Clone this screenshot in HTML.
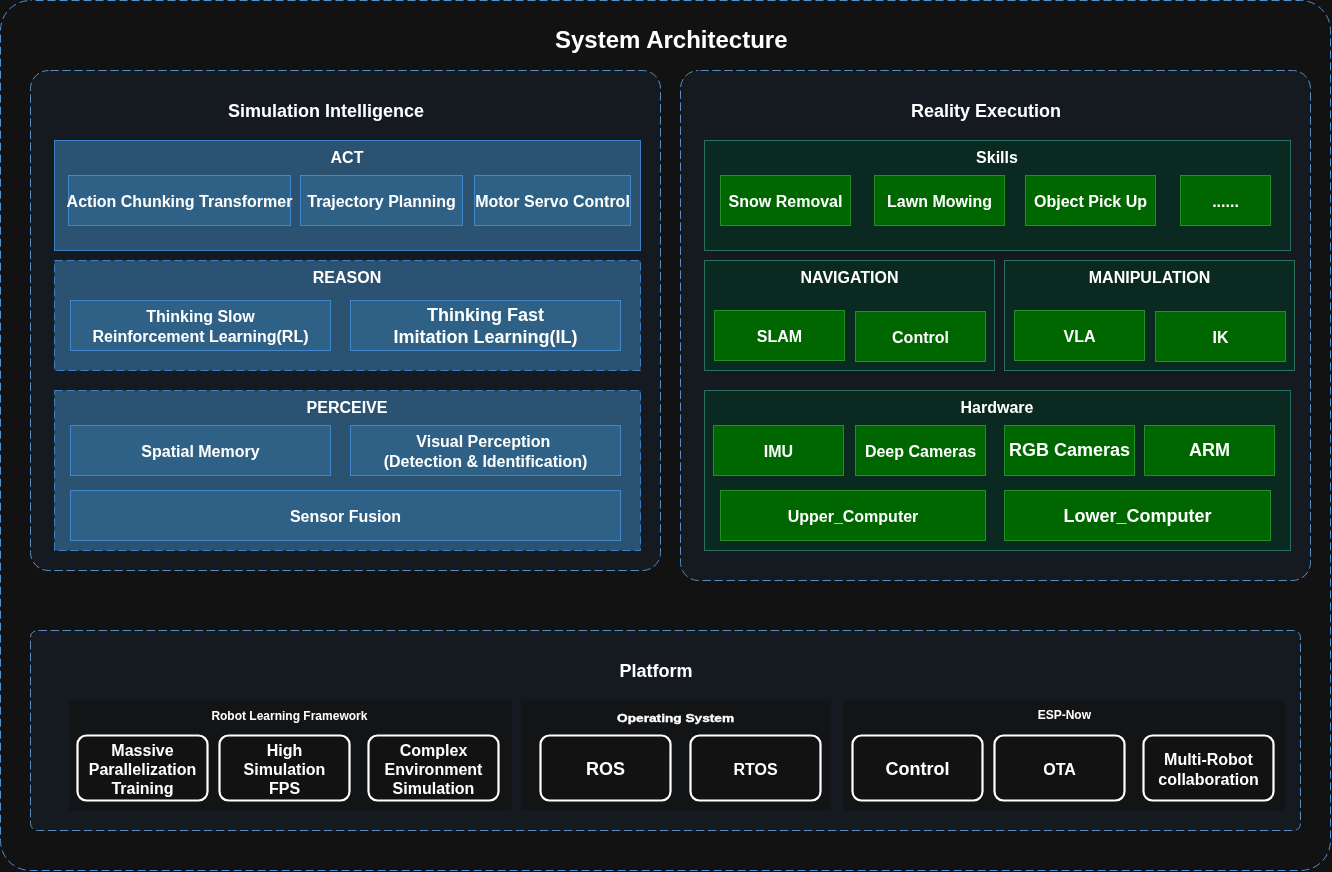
<!DOCTYPE html>
<html><head><meta charset="utf-8"><style>
html,body{margin:0;padding:0;background:#121212;width:1332px;height:872px;overflow:hidden}
svg{display:block;will-change:transform}
text{font-family:"Liberation Sans",sans-serif;font-weight:bold;fill:#fff;text-anchor:middle}
</style></head><body>
<svg width="1332" height="872" viewBox="0 0 1332 872">
<rect x="0.5" y="0.5" width="1330" height="870" rx="30" fill="#121212" stroke="#5090d4" stroke-width="1" stroke-dasharray="8 4" stroke-dashoffset="-5"/>
<text x="671.3" y="48.3" font-size="24">System Architecture</text>
<rect x="30.5" y="70.5" width="630" height="500" rx="18" fill="#151a21" stroke="#5a8cc0" stroke-width="1" stroke-dasharray="8.5 3.5" stroke-dashoffset="-1.8"/>
<rect x="680.5" y="70.5" width="630" height="510" rx="18" fill="#151a21" stroke="#5a8cc0" stroke-width="1" stroke-dasharray="8.5 3.5" stroke-dashoffset="-1.8"/>
<rect x="30.5" y="630.5" width="1270" height="200" rx="7" fill="#151a21" stroke="#5a8cc0" stroke-width="1" stroke-dasharray="8.5 3.5" stroke-dashoffset="-1"/>
<text x="326" y="116.5" font-size="18">Simulation Intelligence</text>
<text x="986" y="116.9" font-size="18">Reality Execution</text>
<text x="656" y="676.8" font-size="18">Platform</text>
<rect x="54.5" y="140.5" width="586" height="110" rx="0" fill="#2c5272" stroke="#3f80c4" stroke-width="1"/>
<text x="347" y="163" font-size="16">ACT</text>
<rect x="68.5" y="175.5" width="222" height="50" rx="0" fill="#2f6085" stroke="#4286cc" stroke-width="1"/>
<text x="179.5" y="206.8" font-size="16">Action Chunking Transformer</text>
<rect x="300.5" y="175.5" width="162" height="50" rx="0" fill="#2f6085" stroke="#4286cc" stroke-width="1"/>
<text x="381.5" y="206.8" font-size="16">Trajectory Planning</text>
<rect x="474.5" y="175.5" width="156" height="50" rx="0" fill="#2f6085" stroke="#4286cc" stroke-width="1"/>
<text x="552.5" y="206.8" font-size="16">Motor Servo Control</text>
<rect x="54.5" y="260.5" width="586" height="110" rx="0" fill="#2c5272" stroke="#3f80c4" stroke-width="1" stroke-dasharray="8 4" stroke-dashoffset="0"/>
<text x="347" y="283" font-size="16">REASON</text>
<rect x="70.5" y="300.5" width="260" height="50" rx="0" fill="#2f6085" stroke="#4286cc" stroke-width="1"/>
<text x="200.5" y="322" font-size="16">Thinking Slow</text>
<text x="200.5" y="342" font-size="16">Reinforcement Learning(RL)</text>
<rect x="350.5" y="300.5" width="270" height="50" rx="0" fill="#2f6085" stroke="#4286cc" stroke-width="1"/>
<text x="485.5" y="321" font-size="18">Thinking Fast</text>
<text x="485.5" y="342.7" font-size="18">Imitation Learning(IL)</text>
<rect x="54.5" y="390.5" width="586" height="160" rx="0" fill="#2c5272" stroke="#3f80c4" stroke-width="1" stroke-dasharray="8 4" stroke-dashoffset="0"/>
<text x="347" y="413" font-size="16">PERCEIVE</text>
<rect x="70.5" y="425.5" width="260" height="50" rx="0" fill="#2f6085" stroke="#4286cc" stroke-width="1"/>
<text x="200.5" y="456.6" font-size="16">Spatial Memory</text>
<rect x="350.5" y="425.5" width="270" height="50" rx="0" fill="#2f6085" stroke="#4286cc" stroke-width="1"/>
<text x="483.3" y="446.8" font-size="16">Visual Perception</text>
<text x="485.5" y="466.5" font-size="16">(Detection &amp; Identification)</text>
<rect x="70.5" y="490.5" width="550" height="50" rx="0" fill="#2f6085" stroke="#4286cc" stroke-width="1"/>
<text x="345.5" y="521.5" font-size="16">Sensor Fusion</text>
<rect x="704.5" y="140.5" width="586" height="110" rx="0" fill="#0a2921" stroke="#2a7060" stroke-width="1"/>
<text x="997" y="162.6" font-size="16">Skills</text>
<rect x="720.5" y="175.5" width="130" height="50" rx="0" fill="#006600" stroke="#22902a" stroke-width="1"/>
<text x="785.5" y="206.8" font-size="16">Snow Removal</text>
<rect x="874.5" y="175.5" width="130" height="50" rx="0" fill="#006600" stroke="#22902a" stroke-width="1"/>
<text x="939.5" y="206.8" font-size="16">Lawn Mowing</text>
<rect x="1025.5" y="175.5" width="130" height="50" rx="0" fill="#006600" stroke="#22902a" stroke-width="1"/>
<text x="1090.5" y="206.8" font-size="16">Object Pick Up</text>
<rect x="1180.5" y="175.5" width="90" height="50" rx="0" fill="#006600" stroke="#22902a" stroke-width="1"/>
<text x="1225.5" y="206.8" font-size="16">......</text>
<rect x="704.5" y="260.5" width="290" height="110" rx="0" fill="#0a2921" stroke="#2a7060" stroke-width="1"/>
<text x="849.5" y="283" font-size="16">NAVIGATION</text>
<rect x="714.5" y="310.5" width="130" height="50" rx="0" fill="#006600" stroke="#22902a" stroke-width="1"/>
<text x="779.5" y="342" font-size="16">SLAM</text>
<rect x="855.5" y="311.5" width="130" height="50" rx="0" fill="#006600" stroke="#22902a" stroke-width="1"/>
<text x="920.5" y="343" font-size="16">Control</text>
<rect x="1004.5" y="260.5" width="290" height="110" rx="0" fill="#0a2921" stroke="#2a7060" stroke-width="1"/>
<text x="1149.5" y="282.6" font-size="16">MANIPULATION</text>
<rect x="1014.5" y="310.5" width="130" height="50" rx="0" fill="#006600" stroke="#22902a" stroke-width="1"/>
<text x="1079.5" y="342" font-size="16">VLA</text>
<rect x="1155.5" y="311.5" width="130" height="50" rx="0" fill="#006600" stroke="#22902a" stroke-width="1"/>
<text x="1220.5" y="343" font-size="16">IK</text>
<rect x="704.5" y="390.5" width="586" height="160" rx="0" fill="#0a2921" stroke="#2a7060" stroke-width="1"/>
<text x="997" y="412.6" font-size="16">Hardware</text>
<rect x="713.5" y="425.5" width="130" height="50" rx="0" fill="#006600" stroke="#22902a" stroke-width="1"/>
<text x="778.5" y="456.6" font-size="16">IMU</text>
<rect x="855.5" y="425.5" width="130" height="50" rx="0" fill="#006600" stroke="#22902a" stroke-width="1"/>
<text x="920.5" y="456.6" font-size="16">Deep Cameras</text>
<rect x="1004.5" y="425.5" width="130" height="50" rx="0" fill="#006600" stroke="#22902a" stroke-width="1"/>
<text x="1069.5" y="456.4" font-size="18">RGB Cameras</text>
<rect x="1144.5" y="425.5" width="130" height="50" rx="0" fill="#006600" stroke="#22902a" stroke-width="1"/>
<text x="1209.5" y="456.4" font-size="18">ARM</text>
<rect x="720.5" y="490.5" width="265" height="50" rx="0" fill="#006600" stroke="#22902a" stroke-width="1"/>
<text x="853" y="521.6" font-size="16">Upper_Computer</text>
<rect x="1004.5" y="490.5" width="266" height="50" rx="0" fill="#006600" stroke="#22902a" stroke-width="1"/>
<text x="1137.5" y="521.8" font-size="18">Lower_Computer</text>
<rect x="69.5" y="700.5" width="442" height="110" rx="0" fill="#131416"/>
<text x="289.4" y="719.5" font-size="12">Robot Learning Framework</text>
<rect x="521.5" y="700.5" width="309" height="110" rx="0" fill="#131416"/>
<text x="675.6" y="722.2" font-size="11.6" textLength="117" lengthAdjust="spacingAndGlyphs" stroke="#fff" stroke-width="0.35">Operating System</text>
<rect x="843.5" y="700.5" width="442" height="110" rx="0" fill="#131416"/>
<text x="1064.3" y="719" font-size="12">ESP-Now</text>
<rect x="77.5" y="735.5" width="130" height="65" rx="9" fill="#121212" stroke="#fff" stroke-width="2.2"/>
<text x="142.5" y="755.8" font-size="16">Massive</text>
<text x="142.5" y="775" font-size="16">Parallelization</text>
<text x="142.5" y="794.3" font-size="16">Training</text>
<rect x="219.5" y="735.5" width="130" height="65" rx="9" fill="#121212" stroke="#fff" stroke-width="2.2"/>
<text x="284.5" y="755.8" font-size="16">High</text>
<text x="284.5" y="775" font-size="16">Simulation</text>
<text x="284.5" y="794.3" font-size="16">FPS</text>
<rect x="368.5" y="735.5" width="130" height="65" rx="9" fill="#121212" stroke="#fff" stroke-width="2.2"/>
<text x="433.5" y="755.8" font-size="16">Complex</text>
<text x="433.5" y="775" font-size="16">Environment</text>
<text x="433.5" y="794.3" font-size="16">Simulation</text>
<rect x="540.5" y="735.5" width="130" height="65" rx="9" fill="#121212" stroke="#fff" stroke-width="2.2"/>
<text x="605.5" y="774.8" font-size="18">ROS</text>
<rect x="690.5" y="735.5" width="130" height="65" rx="9" fill="#121212" stroke="#fff" stroke-width="2.2"/>
<text x="755.5" y="774.8" font-size="16">RTOS</text>
<rect x="852.5" y="735.5" width="130" height="65" rx="9" fill="#121212" stroke="#fff" stroke-width="2.2"/>
<text x="917.5" y="774.7" font-size="18">Control</text>
<rect x="994.5" y="735.5" width="130" height="65" rx="9" fill="#121212" stroke="#fff" stroke-width="2.2"/>
<text x="1059.5" y="774.7" font-size="16">OTA</text>
<rect x="1143.5" y="735.5" width="130" height="65" rx="9" fill="#121212" stroke="#fff" stroke-width="2.2"/>
<text x="1208.5" y="764.6" font-size="16">Multi-Robot</text>
<text x="1208.5" y="785.0" font-size="16">collaboration</text>
</svg>
</body></html>
